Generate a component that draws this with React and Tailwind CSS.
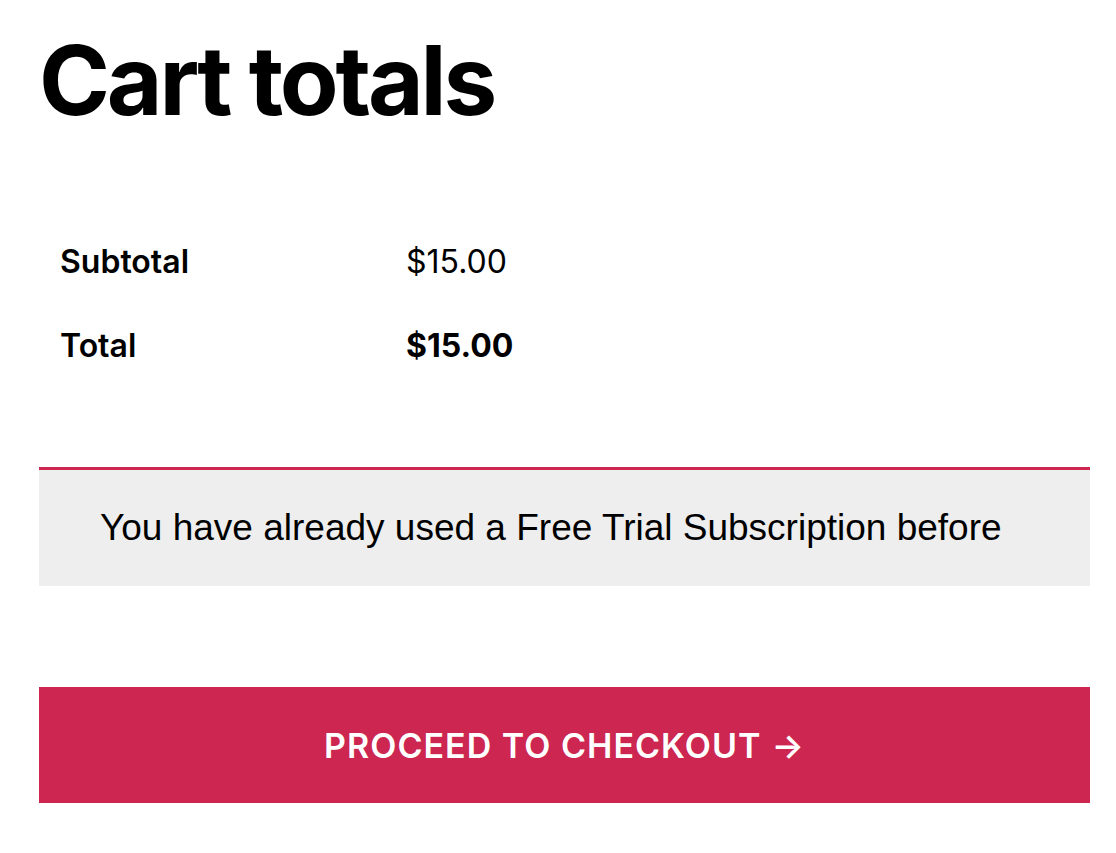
import React from 'react';

const App = () => {
    return (
        <div className="min-h-screen bg-white font-['Inter',sans-serif] text-black">
            <div className="ml-[39px] w-[1051px] pt-[23px]">
                <h1 className="text-[96px] font-bold leading-[1.2] tracking-[-0.033em]">Cart totals</h1>

                <table className="mt-[82px] border-collapse text-[32px] leading-[1.5]">
                    <tbody>
                        <tr>
                            <th className="w-[367px] px-[21px] py-[18px] text-left font-semibold">Subtotal</th>
                            <td className="px-0 py-[18px]">$15.00</td>
                        </tr>
                        <tr>
                            <th className="px-[21px] py-[18px] text-left font-semibold">Total</th>
                            <td className="px-0 py-[18px] font-bold">$15.00</td>
                        </tr>
                    </tbody>
                </table>

                <div className="mt-[79px] border-t-[3px] border-[#cc2651] bg-[#eeeeee] px-[61px] py-[34px] font-['Liberation_Sans',Arial,sans-serif] text-[37px] leading-[48px]">
                    You have already used a Free Trial Subscription before
                </div>

                <button className="mt-[101px] flex h-[116px] w-full items-center justify-center bg-[#cc2651] text-[34px] font-semibold uppercase tracking-[0.03em] text-white">
                    Proceed to Checkout <span className="ml-[10px]">→</span>
                </button>
            </div>
        </div>
    );
};

export default App;
